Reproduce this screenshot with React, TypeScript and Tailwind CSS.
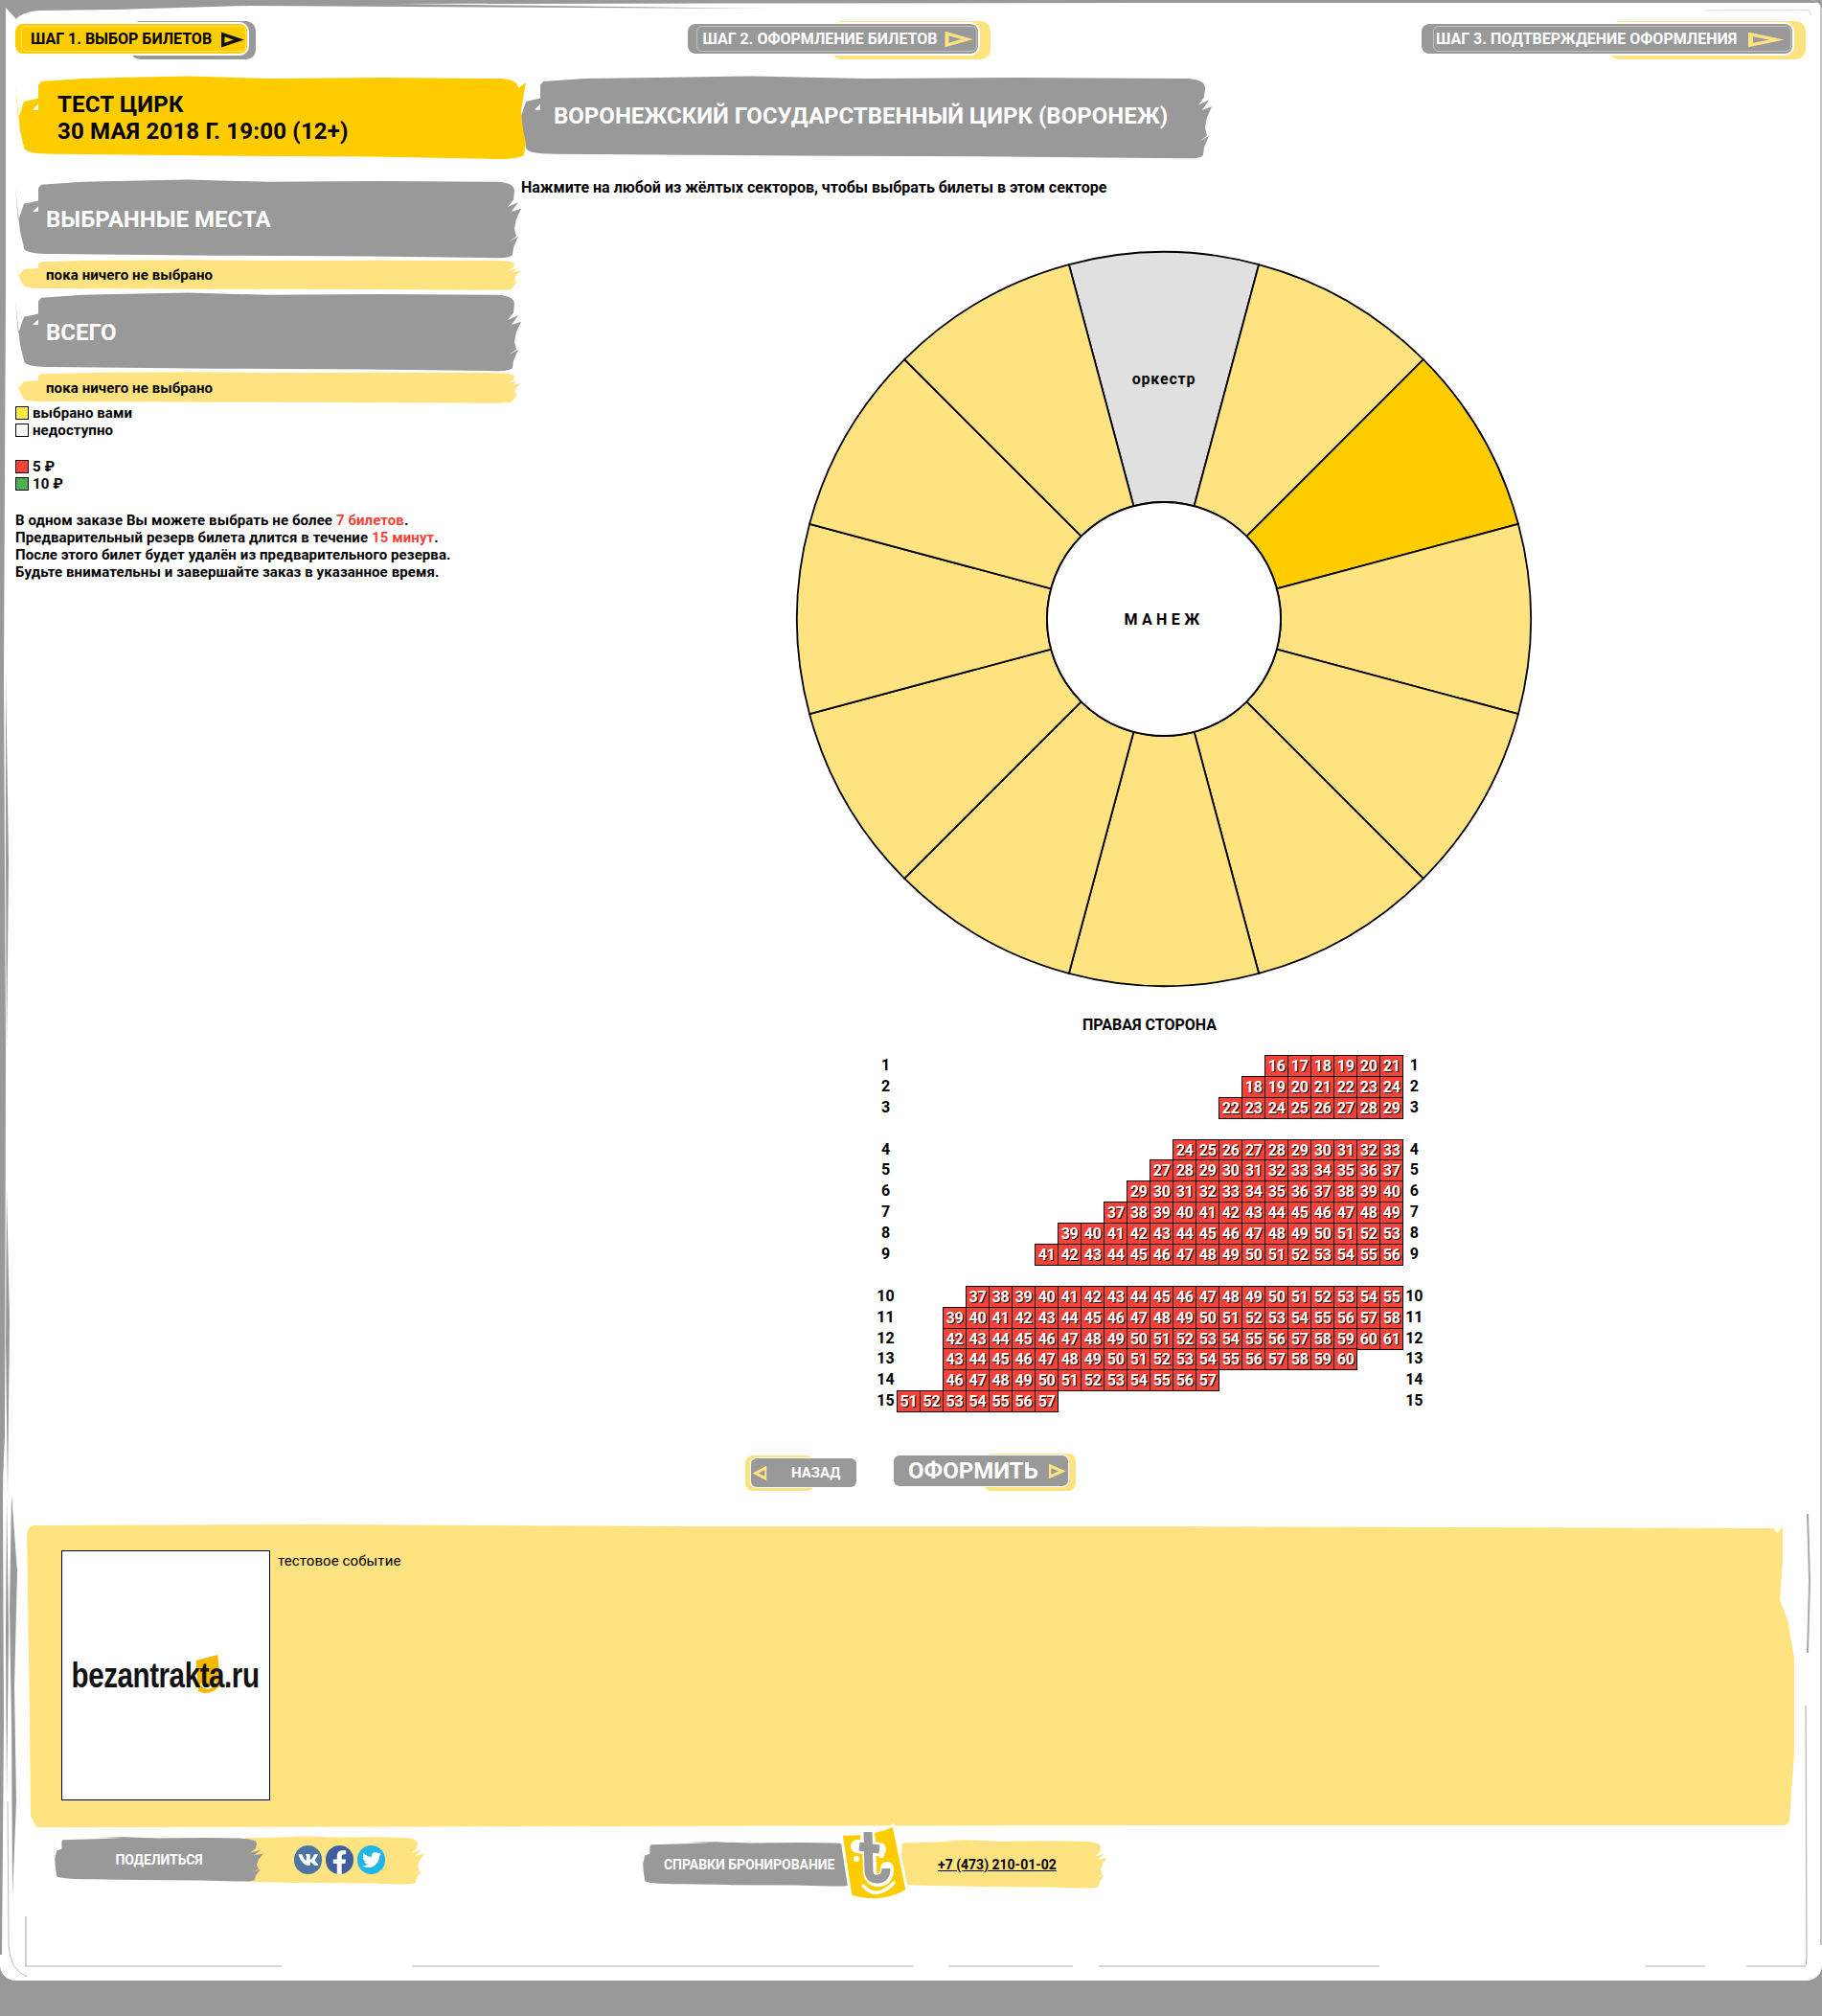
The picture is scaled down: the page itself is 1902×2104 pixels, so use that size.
import React from "react";
import { FaVk, FaFacebookF, FaTwitter } from "react-icons/fa";

const GREY = "#999999";
const YEL = "#ffcc00";
const LIGHT = "#ffe380";

function brushD(w: number, h: number, kind: "jag" | "smooth", xk: number) {
  const k = h / 87;
  const x = (v: number) => v * xk;
  const top = `M${x(24)} ${10 * k} L${x(27)} ${6 * k} L70 ${3 * k} L${w * 0.2} ${2 * k} L${w * 0.34} ${0.5 * k} L${w * 0.5} ${3 * k} L${w * 0.72} ${2 * k} L${w - 26} ${3 * k} Q${w - 8} ${4 * k} ${w - 8} ${13 * k}`;
  const right =
    kind === "jag"
      ? `L${w - 9} ${h * 0.26} L${w - 15} ${h * 0.35} L${w - 4} ${h * 0.29} L${w - 11} ${h * 0.41} L${w - 1} ${h * 0.37} L${w - 6} ${h * 0.5} L${w - 8} ${h * 0.62} L${w - 6} ${h * 0.72} L${w - 14} ${h * 0.79} L${w - 4} ${h * 0.72} L${w - 9} ${h * 0.86} L${w - 10} ${h * 0.95} Q${w - 12} ${h} ${w - 30} ${h * 0.99}`
      : `L${w} ${h * 0.08} L${w - 1} ${h * 0.14} L${w - 5} ${h * 0.42} L${w - 3} ${h * 0.65} L${w} ${h * 0.8} L${w - 2} ${h * 0.95} Q${w - 8} ${h} ${w - 30} ${h}`;
  const rest = `L${w * 0.7} ${h * 0.97} L${w * 0.4} ${h * 0.96} L40 ${h * 0.94} Q${x(9)} ${h * 0.94} ${x(9)} ${h * 0.86} L${x(5)} ${h * 0.66} L0 ${h * 0.1} L${x(3)} ${h * 0.52} L${x(9)} ${h * 0.31} L${x(24)} ${h * 0.27} Z`;
  return `${top} ${right} ${rest}`;
}

function Brush({ w, h, fill, kind = "jag", xk = 1, className, children }: { w: number; h: number; fill: string; kind?: "jag" | "smooth"; xk?: number; className: string; children?: React.ReactNode }) {
  return (
    <div className={"relative " + className}>
      <svg className="absolute left-0 top-0" width={w} height={h} aria-hidden="true">
        <path d={brushD(w, h, kind, xk)} fill={fill} />
        {h > 60 && <path d={`M18 ${h * 0.41} L24 ${h * 0.34} L24 ${h * 0.41} Z`} fill="#fff" />}
      </svg>
      <div className="relative h-full">{children}</div>
    </div>
  );
}

function Arrow({ w, h, color, dir = 1, sw = 3.4 }: { w: number; h: number; color: string; dir?: number; sw?: number }) {
  return (
    <svg width={w} height={h} viewBox="0 0 24 16" preserveAspectRatio="none" className="shrink-0 overflow-visible" style={{ transform: dir < 0 ? "scaleX(-1)" : undefined }} aria-hidden="true">
      <path d="M3 2 L21 8 L3 14 Z" fill="none" stroke={color} strokeWidth={sw} strokeLinejoin="miter" />
    </svg>
  );
}

function Steps() {
  return (
    <div className="flex items-start justify-between pl-4 pr-[17px] pt-[22px]">
      <div className="relative h-[40px] w-[251px]">
        <div className="absolute bottom-0 left-[120px] right-0 top-0 rounded-[10px] bg-[#999]" />
        <div className="relative mt-[3px] flex h-[31px] w-[242px] items-center rounded-lg bg-[#ffcc00] pl-[16px] pt-[1px] shadow-[0_0_0_2px_#fff]">
          <span className="text-[16px] font-bold leading-5 text-black">ШАГ 1. ВЫБОР БИЛЕТОВ</span>
          <span className="ml-[9px]"><Arrow w={22} h={15} color="#111" sw={3.8} /></span>
          <div className="absolute inset-y-[2px] left-[6px] right-[1px] rounded-md border border-white/40" />
        </div>
      </div>
      <div className="relative h-[40px] w-[316px]">
        <div className="absolute bottom-0 left-[150px] right-0 top-0 rounded-[10px] bg-[#ffe380]" />
        <div className="relative mt-[3px] flex h-[31px] w-[303px] items-center rounded-lg bg-[#999] pl-4 pt-[1px] shadow-[0_0_0_2px_#fff]">
          <span className="text-[16px] font-bold leading-5 text-white">ШАГ 2. ОФОРМЛЕНИЕ БИЛЕТОВ</span>
          <span className="ml-[6px]"><Arrow w={28} h={16} color="#ffe380" /></span>
          <div className="absolute inset-y-[2px] left-[9px] right-[1px] rounded-md border border-white/40" />
        </div>
      </div>
      <div className="relative h-[40px] w-[401px]">
        <div className="absolute bottom-0 left-[196px] right-0 top-0 rounded-[10px] bg-[#ffe380]" />
        <div className="relative mt-[3px] flex h-[31px] w-[387px] items-center rounded-lg bg-[#999] pl-[15px] pt-[1px] shadow-[0_0_0_2px_#fff]">
          <span className="text-[16px] font-bold leading-5 text-white">ШАГ 3. ПОДТВЕРЖДЕНИЕ ОФОРМЛЕНИЯ</span>
          <span className="ml-[10px]"><Arrow w={36} h={15} color="#ffe380" /></span>
          <div className="absolute inset-y-[2px] left-[12px] right-[1px] rounded-md border border-white/40" />
        </div>
      </div>
    </div>
  );
}

function Swatch({ color, label }: { color: string; label: React.ReactNode }) {
  return (
    <div className="flex h-[18px] items-center">
      <span className={"mr-1 h-[14px] w-[14px] border border-black " + color} />
      <span className="text-[15px] font-bold leading-[18px] tracking-[0.1px] text-black">{label}</span>
    </div>
  );
}

function Left() {
  return (
    <div className="w-[528px] shrink-0">
      <Brush w={533} h={87} fill={YEL} kind="smooth" className="z-10 h-[87px] w-[533px]">
        <div className="pl-[44px] pt-[16px] text-[24px] font-bold leading-[28px] tracking-[0.2px] text-black">
          <div>ТЕСТ ЦИРК</div>
          <div>30 МАЯ 2018 Г. 19:00 (12+)</div>
        </div>
      </Brush>
      <Brush w={529} h={83} fill={GREY} className="mt-[21px] h-[83px] w-[529px]">
        <div className="flex h-full items-center pl-8 text-[24px] font-bold leading-7 text-white">ВЫБРАННЫЕ МЕСТА</div>
      </Brush>
      <Brush w={529} h={32} fill={LIGHT} className="mt-[1px] h-[32px] w-[529px]">
        <div className="flex h-full items-center pl-8 text-[15px] font-bold leading-[18px] tracking-[0.1px] text-black">пока ничего не выбрано</div>
      </Brush>
      <Brush w={529} h={83} fill={GREY} className="mt-[2px] h-[83px] w-[529px]">
        <div className="flex h-full items-center pl-8 text-[24px] font-bold leading-7 text-white">ВСЕГО</div>
      </Brush>
      <Brush w={529} h={33} fill={LIGHT} className="h-[33px] w-[529px]">
        <div className="flex h-full items-center pl-8 text-[15px] font-bold leading-[18px] tracking-[0.1px] text-black">пока ничего не выбрано</div>
      </Brush>
      <div className="mt-[1px]">
        <Swatch color="bg-[#ffeb3b]" label="выбрано вами" />
        <Swatch color="bg-white" label="недоступно" />
        <div className="h-[19.5px]" />
        <Swatch color="bg-[#f44336]" label="5 ₽" />
        <Swatch color="bg-[#4caf50]" label="10 ₽" />
      </div>
      <div className="mt-[20px] text-[15px] font-bold leading-[18px] tracking-[0.1px] text-black">
        <div>В одном заказе Вы можете выбрать не более <span className="text-[#f44336]">7 билетов</span>.</div>
        <div>Предварительный резерв билета длится в течение <span className="text-[#f44336]">15 минут</span>.</div>
        <div>После этого билет будет удалён из предварительного резерва.</div>
        <div>Будьте внимательны и завершайте заказ в указанное время.</div>
      </div>
    </div>
  );
}

function Wheel() {
  const c = 386;
  const R = 383;
  const r = 122;
  const pt = (rad: number, deg: number) => {
    const a = (deg * Math.PI) / 180;
    return `${(c + rad * Math.sin(a)).toFixed(2)} ${(c - rad * Math.cos(a)).toFixed(2)}`;
  };
  const sectors = Array.from({ length: 12 }, (_, i) => {
    const a0 = -15 + i * 30;
    const a1 = a0 + 30;
    const d = `M${pt(r, a0)} L${pt(R, a0)} A${R} ${R} 0 0 1 ${pt(R, a1)} L${pt(r, a1)} A${r} ${r} 0 0 0 ${pt(r, a0)} Z`;
    const fill = i === 0 ? "#e0e0e0" : i === 2 ? YEL : LIGHT;
    return <path key={i} d={d} fill={fill} stroke="#000" strokeWidth="1.8" />;
  });
  return (
    <svg width={772} height={772} viewBox="0 0 772 772" className="ml-[285px] mt-[54px] block">
      {sectors}
      <circle cx={c} cy={c} r={r} fill="#fff" stroke="#000" strokeWidth="1.8" />
      <text x={c} y={141} textAnchor="middle" fontFamily="Roboto" fontWeight="700" fontSize="16" letterSpacing="0.8" fill="#000">оркестр</text>
      <text x={c} y={c + 6} textAnchor="middle" fontFamily="Roboto" fontWeight="700" fontSize="16" letterSpacing="4.4" fill="#000">МАНЕЖ</text>
    </svg>
  );
}

const ROWS: [number, number, number, number, number][] = [
  [1, 1, 16, 16, 6],
  [2, 2, 15, 18, 7],
  [3, 3, 14, 22, 8],
  [4, 5, 12, 24, 10],
  [5, 6, 11, 27, 11],
  [6, 7, 10, 29, 12],
  [7, 8, 9, 37, 13],
  [8, 9, 7, 39, 15],
  [9, 10, 6, 41, 16],
  [10, 12, 3, 37, 19],
  [11, 13, 2, 39, 20],
  [12, 14, 2, 42, 20],
  [13, 15, 2, 43, 18],
  [14, 16, 2, 46, 12],
  [15, 17, 0, 51, 7],
];

function Seats() {
  return (
    <div className="ml-[368px] mt-[21px] grid grid-cols-[repeat(24,24.02px)] auto-rows-[21.9px]">
      {ROWS.map(([label, row, start, first, count]) => (
        <React.Fragment key={label}>
          <div className="pl-[1px] text-center text-[16px] font-bold leading-[21px] text-black" style={{ gridRow: row, gridColumn: 1 }}>{label}</div>
          {Array.from({ length: count }, (_, i) => (
            <div key={i} className="relative h-[23px] w-[25px] border border-black bg-[#f44336] text-center text-[16px] font-bold leading-[21px] tracking-[-0.2px] text-white [text-shadow:1px_1px_0_#000]" style={{ gridRow: row, gridColumn: start + i + 2 }}>
              {first + i}
            </div>
          ))}
          <div className="text-center text-[16px] font-bold leading-[21px] text-black" style={{ gridRow: row, gridColumn: 24 }}>{label}</div>
        </React.Fragment>
      ))}
    </div>
  );
}

function Buttons() {
  return (
    <div className="ml-[234px] mt-[44px] flex items-start gap-[39px]">
      <div className="relative mt-[2px] h-[37px] w-[116px]">
        <div className="absolute bottom-0 left-0 top-0 w-[72px] rounded-lg bg-[#ffe380]" />
        <div className="relative ml-[6px] mt-[3px] flex h-[30px] w-[110px] items-center rounded-md bg-[#999] pl-[3px] shadow-[0_0_0_1px_#fff]">
          <Arrow w={14} h={15} color="#ffe380" dir={-1} />
          <span className="ml-[25px] text-[15px] font-bold leading-5 text-white">НАЗАД</span>
        </div>
      </div>
      <div className="relative h-[39px] w-[190px]">
        <div className="absolute bottom-0 right-0 top-0 w-[96px] rounded-lg bg-[#ffe380]" />
        <div className="relative mt-[2px] flex h-[32px] w-[182px] items-center rounded-md bg-[#999] pl-[15px] shadow-[0_0_0_1px_#fff]">
          <span className="text-[24px] font-bold leading-7 text-white">ОФОРМИТЬ</span>
          <span className="ml-[10px]"><Arrow w={17} h={15} color="#ffe380" /></span>
        </div>
      </div>
    </div>
  );
}

function EventCard() {
  return (
    <div className="relative ml-[28px] mt-[34px] h-[317px] w-[1845px]">
      <svg className="absolute left-0 top-0" width={1845} height={317} aria-hidden="true">
        <path d="M8 2 L300 1 L700 3 L1200 3 L1800 5 L1824 5 L1827 10 L1833 4 L1833 40 L1830 80 L1838 100 L1845 140 L1845 240 L1840 311 L1836 315 L1200 315 L600 316 L10 317 L4 305 L3 200 L0 12 Q0 2 8 2 Z" fill={LIGHT} />
      </svg>
      <div className="relative flex pl-[36px] pt-[28px]">
        <div className="flex h-[261px] w-[218px] shrink-0 items-center justify-center overflow-hidden border border-black bg-white">
          <div className="relative flex origin-center scale-x-[0.82] items-center font-['Liberation_Sans',sans-serif] text-[36px] font-bold leading-[40px] tracking-[-0.5px] text-[#111]">
            <svg className="absolute left-[157px] top-[-2px]" width="34" height="44" viewBox="0 0 44 44" preserveAspectRatio="none" aria-hidden="true">
              <path d="M2 6 L38 0 L42 32 Q24 44 6 38 Z" fill="#f5b800" />
              <path d="M10 30 Q22 40 34 28" stroke="#fff" strokeWidth="2.5" fill="none" />
            </svg>
            <span className="relative">bezantrakta.ru</span>
          </div>
        </div>
        <div className="ml-[8px] pt-[1px] text-[15px] font-normal leading-5 tracking-[0.1px] text-black">тестовое событие</div>
      </div>
    </div>
  );
}

function Badge() {
  return (
    <svg className="absolute left-[207px] top-[-19px]" width="71" height="82" viewBox="0 0 71 82" aria-hidden="true">
      <path d="M1 11 Q32 13 56 2 L70 70 Q42 86 11 76 Z" fill={YEL} stroke="#fff" strokeWidth="3" />
      <path d="M29 9 L28 18 M18 24 L41 27 M30 16 L31 50 Q32 60 41 59 Q49 58 49 47" fill="none" stroke="#fff" strokeWidth="14" strokeLinecap="round" />
      <path d="M29 9 L30 50 Q31 59 40 58 Q48 57 48 47 M20 24 L41 27" fill="none" stroke={GREY} strokeWidth="9" />
      <circle cx="17" cy="37" r="3" fill="#fff" />
      <circle cx="43" cy="33" r="3" fill="#fff" />
      <path d="M24 65 Q38 81 56 62" fill="none" stroke="#fff" strokeWidth="3.5" strokeLinecap="round" />
    </svg>
  );
}

function Social({ bg, children }: { bg: string; children: React.ReactNode }) {
  return (
    <span className={"flex h-[30px] w-[29.4px] items-center justify-center overflow-hidden rounded-full text-white " + bg}>{children}</span>
  );
}

function Footer() {
  return (
    <div className="flex items-start pt-[9px]">
      <div className="relative ml-[56px] h-[51px] w-[384px]">
        <div className="absolute left-[200px] top-[0] h-[51px] w-[60px] bg-[#ffe380] [clip-path:polygon(0_4%,100%_2%,100%_96%,0_94%)]" />
        <Brush w={190} h={51} fill={LIGHT} xk={0.35} className="!absolute left-[198px] top-0 h-[51px] w-[190px]" />
        <Brush w={220} h={47} fill={GREY} xk={0.35} className="mt-[1px] h-[47px] w-[220px]">
          <div className="flex h-full items-center justify-center text-[14px] font-bold leading-[18px] tracking-[-0.1px] text-white">ПОДЕЛИТЬСЯ</div>
        </Brush>
        <div className="absolute left-[251px] top-[10px] flex gap-[3.6px]">
          <Social bg="bg-[#4c75a3]"><FaVk size={22} /></Social>
          <Social bg="bg-[#3f5e9e]"><FaFacebookF size={25} className="mt-[5px]" /></Social>
          <Social bg="bg-[#1fb6ea]"><FaTwitter size={20} /></Social>
        </div>
      </div>
      <div className="relative ml-[230px] mt-[6px] h-[51px] w-[483px]">
        <Brush w={228} h={47} fill={GREY} xk={0.35} className="h-[47px] w-[228px]">
          <div className="flex h-full items-center pl-[23px] text-[14px] font-bold leading-[18px] tracking-[-0.05px] text-white">СПРАВКИ БРОНИРОВАНИЕ</div>
        </Brush>
        <Brush w={224} h={51} fill={LIGHT} xk={0.35} className="!absolute left-[263px] top-[-2px] h-[51px] w-[224px]">
          <a className="flex h-full items-center pl-[46px] text-[14px] font-bold leading-[18px] text-black underline">+7 (473) 210-01-02</a>
        </Brush>
        <Badge />
      </div>
    </div>
  );
}

function Frame() {
  return (
    <svg className="pointer-events-none absolute left-0 top-0" width={1902} height={2067} aria-hidden="true">
      <path d="M0 0 L1902 0 L1902 3 L1200 3 L410 4 L800 9 L260 6 L120 10 L40 11 Q22 13 17 20 L6 8 L6 300 L4 700 L6 1100 L5 1500 L0 1600 Z" fill={GREY} />
      <path d="M1900 6 L1902 6 L1902 2030 L1900 2030 Z" fill="#c4c4c4" />
      <path d="M1780 11 L1886 10 Q1890 11 1890 16" fill="none" stroke="#e0e0e0" strokeWidth="1.2" />
      <g fill={GREY}>
        <path d="M0 1100 L3 1100 L5 1400 L3 1560 L4 1800 L2 2040 L0 2040 Z" />
        <path d="M6 700 L9 900 L7 1100 L6 900 Z" />
        <path d="M7 1240 L10 1380 L8 1560 L6 1400 Z" />
        <path d="M7 1560 L9 1700 L7 1880 L6 1700 Z" />
        <path d="M12 1560 L18 1640 L15 1760 L17 1880 L13 1980 L12 1800 L10 1680 Z" />
      </g>
      <path d="M8 1880 L9 2030 Q10 2056 28 2063" fill="none" stroke="#bbb" strokeWidth="1" />
      <path d="M27 2000 L27 2052 L294 2052 M430 2052 L954 2052 M990 2052 L1120 2052 M1147 2052 L1440 2052 M1717 2052 L1780 2052 M1823 2052 L1884 2052 Q1886 2052 1886 2040 L1885 1780" fill="none" stroke="#b4b4b4" strokeWidth="1.2" />
      <path d="M1887 1580 L1889 1650 L1887 1725" fill="none" stroke="#aaa" strokeWidth="2" />
    </svg>
  );
}

export default function App() {
  return (
    <div className="relative h-[2104px] w-[1902px] overflow-hidden bg-[#999] font-['Roboto',sans-serif]">
      <div className="relative h-[2067px] overflow-hidden rounded-b-[16px] rounded-tr-[12px] bg-white">
        <Frame />
        <div className="relative">
          <Steps />
          <div className="flex pl-4 pt-[17px]">
            <Left />
            <div className="w-[1312px] shrink-0">
              <Brush w={726} h={87} fill={GREY} className="-ml-1 h-[87px] w-[726px]">
                <div className="flex h-full items-center pl-[38px] pb-[4px] text-[24px] font-bold leading-7 text-white">ВОРОНЕЖСКИЙ ГОСУДАРСТВЕННЫЙ ЦИРК (ВОРОНЕЖ)</div>
              </Brush>
              <div className="mt-[20px] text-[16px] font-bold leading-5 text-black">Нажмите на любой из жёлтых секторов, чтобы выбрать билеты в этом секторе</div>
              <Wheel />
              <div className="mt-[28px] text-center text-[16px] font-bold leading-5 text-black">ПРАВАЯ СТОРОНА</div>
              <Seats />
              <Buttons />
            </div>
          </div>
          <EventCard />
          <Footer />
        </div>
      </div>
    </div>
  );
}
